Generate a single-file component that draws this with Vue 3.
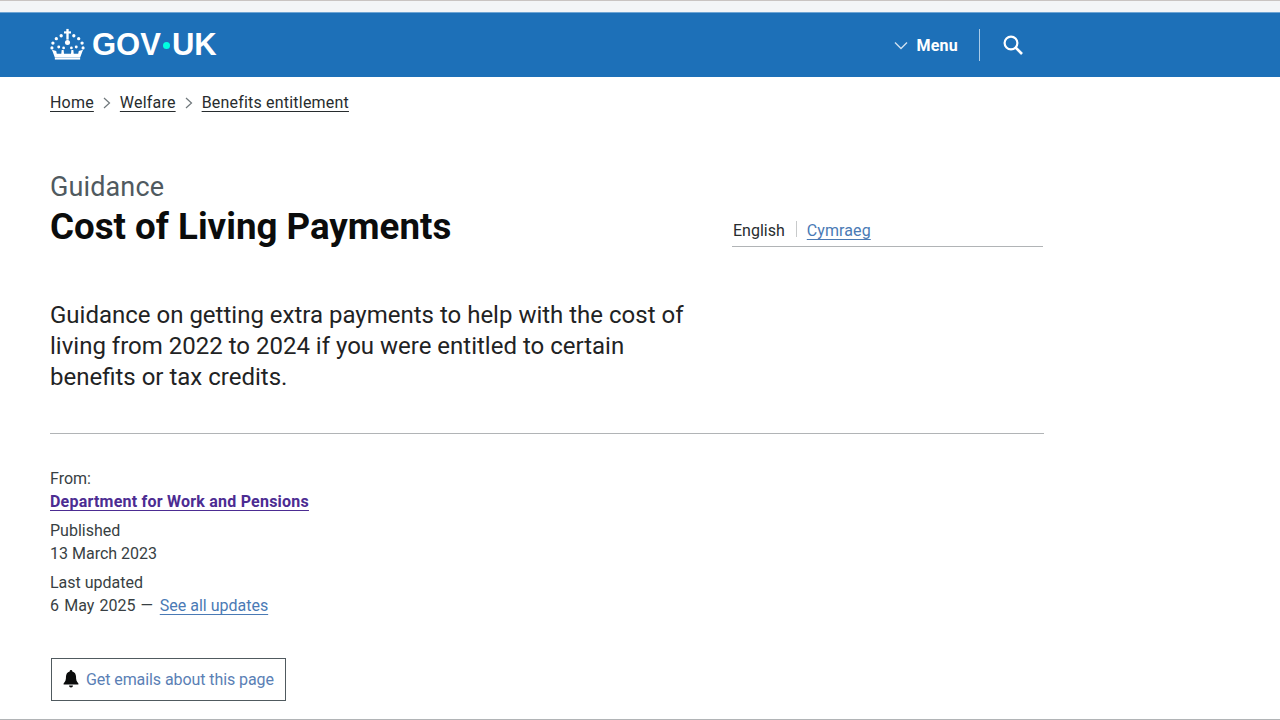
<script setup>
const crumbs = ['Home', 'Welfare', 'Benefits entitlement']
</script>

<template>
  <div class="page">
    <div class="topstrip"></div>
    <header class="masthead">
      <div class="logo">
        <svg class="crown" viewBox="0 0 36 32" width="36" height="32" aria-hidden="true">
          <g fill="#fff">
            <rect x="16.8" y="0.5" width="2.4" height="11"/>
            <rect x="14.4" y="3" width="7.2" height="2.2"/>
            <circle cx="11.5" cy="7.5" r="1.7"/><circle cx="24.5" cy="7.5" r="1.7"/>
            <circle cx="6.5" cy="10.5" r="1.7"/><circle cx="29.5" cy="10.5" r="1.7"/>
            <circle cx="3" cy="15" r="1.7"/><circle cx="33" cy="15" r="1.7"/>
            <circle cx="18" cy="14.500" r="2.6"/>
            <circle cx="2" cy="20" r="1.6"/><circle cx="34" cy="20" r="1.6"/>
            <circle cx="9" cy="19" r="1.5"/><circle cx="27" cy="19" r="1.5"/>
            <circle cx="14" cy="20" r="1.400"/><circle cx="22" cy="20" r="1.400"/>
            <path d="M2 22l4.400 1.200.6 2.800h4.600l.4-3.800h2l.4 3.800h7.200l.4-3.800h2l.4 3.800H29l.6-2.800L34 22l-3 8H5z"/>
            <path d="M5 30h26v2H5z"/>
          </g>
        </svg>
        <span class="wordmark">GOV<i class="dot"></i>UK</span>
      </div>
      <nav class="headnav">
        <button class="menu" type="button">
          <svg viewBox="0 0 14 9" width="14" height="9" aria-hidden="true"><path d="M1 1.500l6 6 6-6" fill="none" stroke="#cfe0f0" stroke-width="1.400"/></svg>
          <span>Menu</span>
        </button>
        <span class="sep"></span>
        <svg class="search" viewBox="0 0 22 22" width="22" height="22" aria-hidden="true">
          <circle cx="9" cy="9" r="6.400" fill="none" stroke="#fff" stroke-width="2.200"/>
          <path d="M13.500 13.500l6.500 6.500" stroke="#fff" stroke-width="2.600" fill="none"/>
        </svg>
      </nav>
    </header>

    <main class="content">
      <ol class="crumbs">
        <li v-for="(c, i) in crumbs" :key="c">
          <svg v-if="i" class="chev" viewBox="0 0 8 12" width="8" height="12" aria-hidden="true"><path d="M1 1l5.500 5L1 11" fill="none" stroke="#6f777b" stroke-width="1.200"/></svg>
          <a href="#">{{ c }}</a>
        </li>
      </ol>

      <div class="titlerow">
        <div class="titles">
          <div class="kicker">Guidance</div>
          <h1>Cost of Living Payments</h1>
        </div>
        <div class="langs">
          <span class="en">English</span>
          <span class="langsep"></span>
          <a href="#" class="cy">Cymraeg</a>
        </div>
      </div>

      <p class="lede">Guidance on getting extra payments to help with the cost of living from 2022 to 2024 if you were entitled to certain benefits or tax credits.</p>

      <hr class="rule" />

      <dl class="meta">
        <div class="group">
          <dt>From:</dt>
          <dd><a href="#" class="org">Department for Work and Pensions</a></dd>
        </div>
        <div class="group">
          <dt>Published</dt>
          <dd>13 March 2023</dd>
        </div>
        <div class="group">
          <dt>Last updated</dt>
          <dd class="updated">6 May 2025 — <a href="#" class="blue">See all updates</a></dd>
        </div>
      </dl>

      <a href="#" class="emails">
        <svg viewBox="0 0 16 18" width="16" height="18" aria-hidden="true">
          <path fill="#0b0c0c" d="M8 0a1.300 1.300 0 0 1 1.300 1.400C11.700 2 13 4 13 6.600c0 3.600.7 5.200 2.400 6.900v1H.6v-1C2.300 11.800 3 10.200 3 6.600 3 4 4.300 2 6.700 1.400A1.300 1.300 0 0 1 8 0z"/>
          <path fill="#0b0c0c" d="M6 15.500h4a2 2 0 0 1-4 0z"/>
        </svg>
        <span>Get emails about this page</span>
      </a>
    </main>
    <div class="bottomline"></div>
  </div>
</template>

<style scoped>
.page {
  width: 1280px;
  height: 720px;
  overflow: hidden;
  position: relative;
  background: #fff;
  color: #0b0c0c;
  font-family: Roboto, "Noto Sans", sans-serif;
}
.topstrip {
  height: 12px;
  background: #f3f5f7;
  border-top: 1px solid #c9c4c2;
  box-sizing: border-box;
}
.masthead {
  height: 65px;
  box-sizing: border-box;
  background: #1d70b8;
  border-top: 1px solid #6fa5d4;
  display: flex;
  align-items: center;
  width: 1280px;
  padding: 0 256px 0 50px;
  justify-content: space-between;
}
.logo { display: flex; align-items: center; gap: 7px; margin-top: -2px; }
.crown { display: block; width: 35px; height: 32px; }
.wordmark {
  font-family: "Liberation Sans", sans-serif;
  font-weight: 700;
  font-size: 31px;
  line-height: 32px;
  color: #fff;
  display: flex;
  align-items: center;
  padding-top: 2px;
}
.dot {
  display: inline-block;
  width: 7px;
  height: 7px;
  border-radius: 50%;
  background: #00ffe0;
  margin: 0 2px;
}
.headnav { display: flex; align-items: center; }
.menu {
  all: unset;
  display: flex;
  align-items: center;
  gap: 8px;
  color: #fff;
  font-family: Roboto, sans-serif;
  font-weight: 700;
  font-size: 16px;
  letter-spacing: .25px;
}
.sep { width: 1px; height: 32px; background: #a9cbe8; margin: 0 22px 0 21px; }
.search { display: block; }
.content { padding: 0 0 0 50px; width: 994px; }
.crumbs {
  list-style: none;
  margin: 0;
  padding: 16px 0 0;
  display: flex;
  font-size: 16px;
  line-height: 20px;
  letter-spacing: .2px;
  color: #383f43;
}
.crumbs li { display: flex; align-items: center; }
.crumbs a { color: #272c2e; text-decoration: underline; text-underline-offset: 3px; }
.chev { margin: 0 9px; }
.titlerow {
  display: flex;
  justify-content: space-between;
  align-items: flex-end;
  margin-top: 59px;
}
.titles { flex: 1; }
.kicker { font-size: 27px; line-height: 30px; letter-spacing: .12px; color: #505a5f; }
h1 {
  margin: 5px 0 0;
  font-size: 36.7px;
  line-height: 40px;
  font-weight: 700;
}
.langs {
  width: 311px;
  box-sizing: border-box;
  border-bottom: 1px solid #b1b4b6;
  display: flex;
  align-items: center;
  font-size: 16px;
  line-height: 20px;
  padding: 0 0 5px 1px;
  margin-right: 1px;
}
.en { color: #272c2e; }
.langsep {
  width: 1px;
  height: 16px;
  background: #c8cacb;
  margin: -5px 10px 0 11px;
}
.cy {
  color: #4a7ab5;
  letter-spacing: .1px;
  text-underline-offset: 3px;
}
.lede {
  margin: 53px 0 0;
  width: 640px;
  font-size: 24px;
  line-height: 31px;
  color: #1f2324;
}
.rule { border: 0; border-top: 1px solid #b1b4b6; margin: 40px 0 0; }
.meta { margin: 33px 0 0; font-size: 16px; line-height: 23px; color: #383f43; }
.meta dt, .meta dd { margin: 0; }
.group + .group { margin-top: 6px; }
.org { color: #4c2c92; font-weight: 700; letter-spacing: .22px; text-underline-offset: 3px; }
.updated { word-spacing: 1.2px; }
.blue { color: #4a7ab5; word-spacing: 0; margin-left: 1.5px; text-underline-offset: 3px; }
.emails {
  margin: 41px 0 0 1px;
  display: inline-flex;
  align-items: center;
  gap: 7px;
  width: 235px;
  height: 43px;
  box-sizing: border-box;
  border: 1px solid #505a5f;
  padding-left: 11px;
  color: #5a80b5;
  text-decoration: none;
  font-size: 16px;
  letter-spacing: -.08px;
}
.emails svg { margin-top: -2px; }
.bottomline {
  position: absolute;
  left: 0;
  right: 0;
  bottom: 0;
  height: 1px;
  background: #b1b4b6;
}
</style>
